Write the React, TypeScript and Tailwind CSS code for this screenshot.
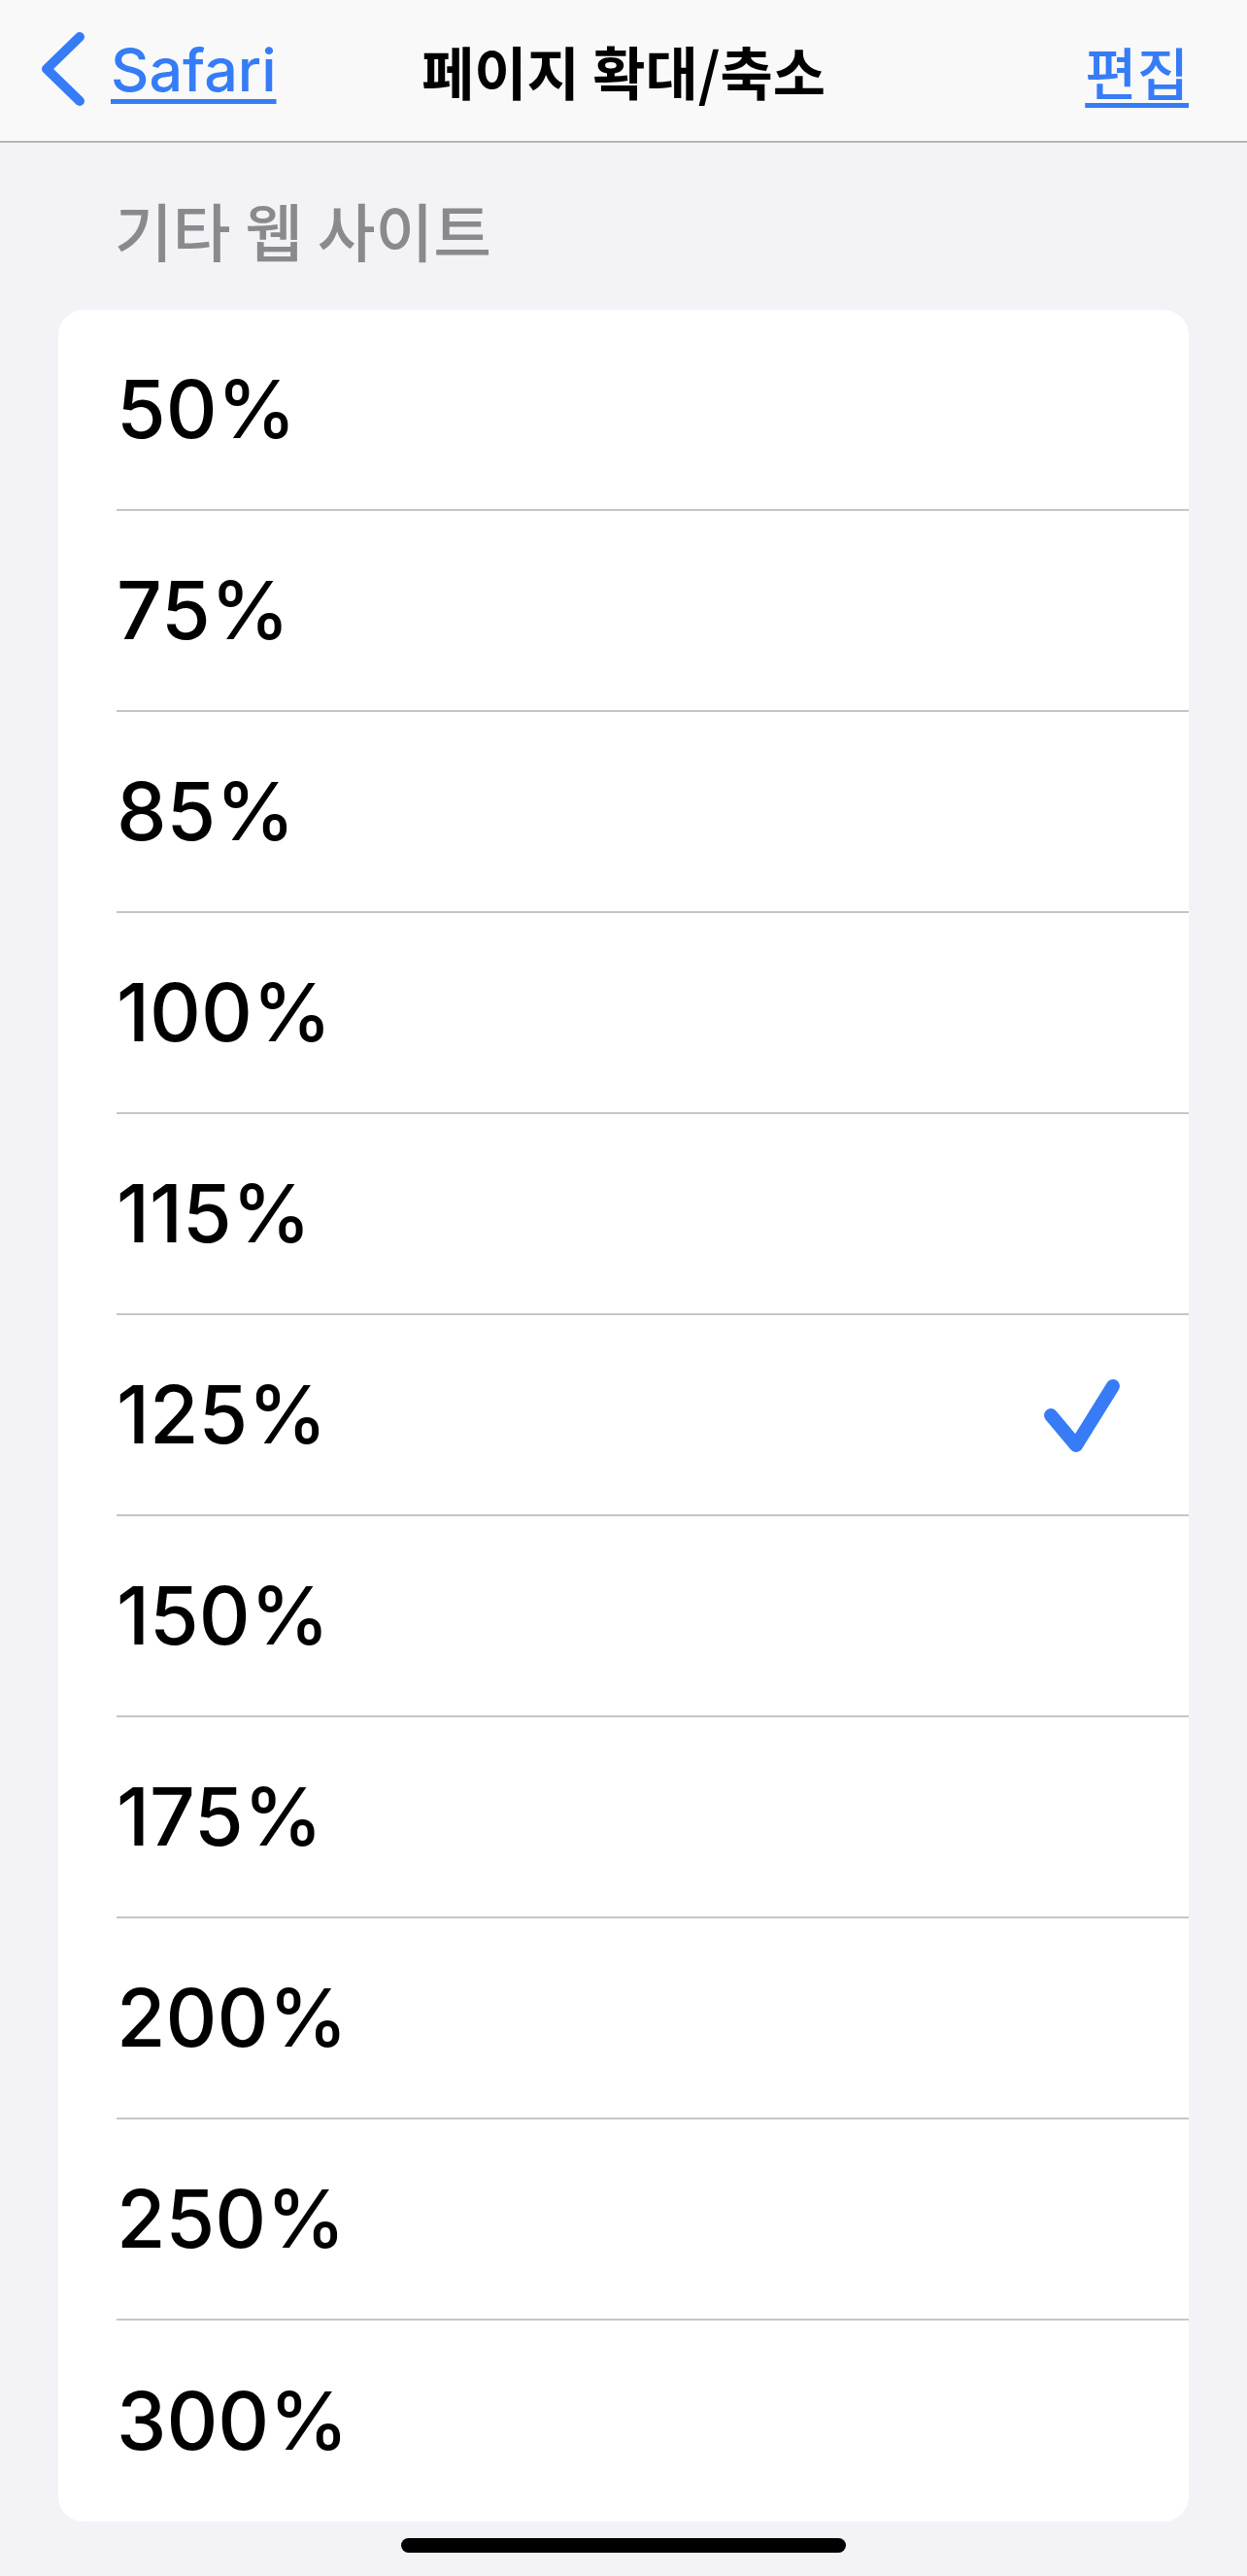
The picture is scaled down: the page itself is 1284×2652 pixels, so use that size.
import React from "react";

const levels = ["50%", "75%", "85%", "100%", "115%", "125%", "150%", "175%", "200%", "250%", "300%"];
const selected = "125%";

const kr = { fontFamily: '"Noto Sans CJK KR", "Noto Sans", sans-serif' };
const latin = { fontFamily: 'Inter, "Liberation Sans", Arial, sans-serif' };

function NavBar() {
  return (
    <header className="grid h-[147px] grid-cols-[1fr_auto_1fr] items-center border-b-2 border-[#b4b4b4] bg-[#f9f9f9]">
      <div className="flex items-center pl-[38px]">
        <svg width="56" height="84" viewBox="0 0 56 84" className="-mt-[4px]">
          <polyline
            points="44,9 10,42 44,75"
            fill="none"
            stroke="#367cf6"
            strokeWidth="10"
            strokeLinecap="round"
            strokeLinejoin="round"
          />
        </svg>
        <a
          className="ml-[20px] text-[61px] font-medium leading-none text-[#367cf6] underline decoration-[5px] underline-offset-[8px]"
          style={latin}
        >
          Safari
        </a>
      </div>
      <h1 className="text-[59px] font-bold leading-none text-black" style={kr}>
        페이지 확대/축소
      </h1>
      <div className="flex justify-end pr-[60px]">
        <a
          className="text-[58px] font-medium leading-none text-[#367cf6] underline decoration-[5px] underline-offset-[8px]"
          style={kr}
        >
          편집
        </a>
      </div>
    </header>
  );
}

function Check() {
  return (
    <svg width="90" height="90" viewBox="0 0 90 90">
      <polyline
        points="10,45 36,76 74,15"
        fill="none"
        stroke="#377cf6"
        strokeWidth="14"
        strokeLinecap="round"
        strokeLinejoin="round"
      />
    </svg>
  );
}

export default function App() {
  return (
    <div className="min-h-[2652px] w-[1284px] bg-[#f2f2f7]">
      <NavBar />
      <div className="h-[172px] pl-[118px] pt-[57px]">
        <div className="text-[65px] font-medium leading-none text-[#8a8a8e]" style={kr}>
          기타 웹 사이트
        </div>
      </div>
      <div className="mx-[60px] overflow-hidden rounded-[26px] bg-white">
        {levels.map((l, i) => (
          <div key={l} className="pl-[60px]">
            <div
              className={
                "flex h-[207px] items-center justify-between pr-[62px] " +
                (i < levels.length - 1 ? "border-b-2 border-[#c6c6c8]" : "")
              }
            >
              <span className="text-[82px] font-medium leading-none text-black" style={latin}>
                {l}
              </span>
              {l === selected && <Check />}
            </div>
          </div>
        ))}
      </div>
      <div className="flex justify-center pt-[17px]">
        <div className="h-[15px] w-[458px] rounded-full bg-black" />
      </div>
    </div>
  );
}
